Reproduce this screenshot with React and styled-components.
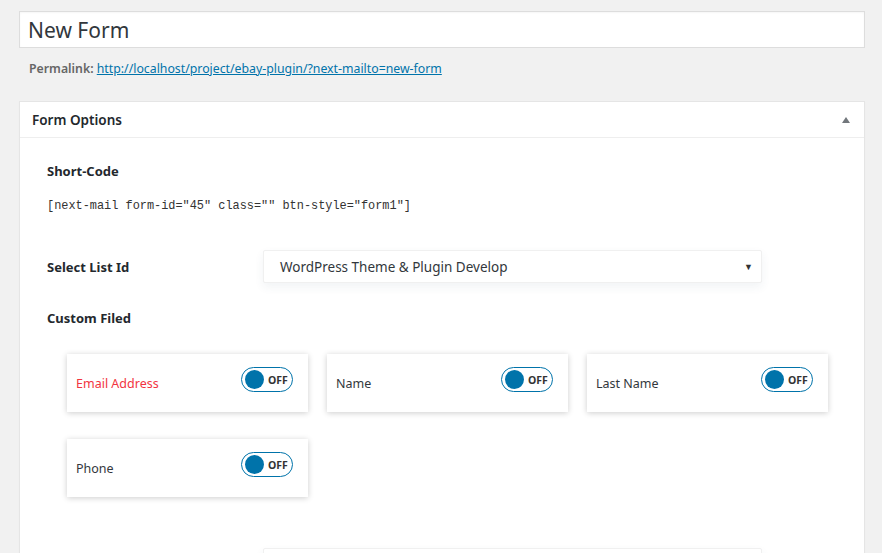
import React from "react";
import styled, { createGlobalStyle } from "styled-components";

const fields = [
  { label: "Email Address", required: true },
  { label: "Name" },
  { label: "Last Name" },
  { label: "Phone" },
];

function Toggle() {
  return (
    <Switch>
      <Knob />
      <SwitchText>OFF</SwitchText>
    </Switch>
  );
}

export default function App() {
  return (
    <>
      <GlobalStyle />
      <Page>
        <TitleInput defaultValue="New Form" />
        <Permalink>
          <strong>Permalink:</strong>{" "}
          <a href="#">http://localhost/project/ebay-plugin/?next-mailto=new-form</a>
        </Permalink>

        <Postbox>
          <PostboxHeader>
            <HeaderTitle>Form Options</HeaderTitle>
            <ToggleArrow />
          </PostboxHeader>
          <Inside>
            <Label>Short-Code</Label>
            <ShortCode>[next-mail form-id="45" class="" btn-style="form1"]</ShortCode>

            <FieldRow>
              <Label>Select List Id</Label>
              <SelectBox>
                <span>WordPress Theme &amp; Plugin Develop</span>
                <Caret>▼</Caret>
              </SelectBox>
            </FieldRow>

            <Label>Custom Filed</Label>
            <CardGrid>
              {fields.map((f) => (
                <Card key={f.label}>
                  <CardLabel $required={f.required}>{f.label}</CardLabel>
                  <Toggle />
                </Card>
              ))}
            </CardGrid>

            <FieldRow $bottom>
              <span />
              <SelectBox />
            </FieldRow>
          </Inside>
        </Postbox>
      </Page>
    </>
  );
}

const GlobalStyle = createGlobalStyle`
  html, body {
    margin: 0;
    background: #f1f1f1;
    overflow: hidden;
  }
  body {
    font-family: "Noto Sans", "Open Sans", sans-serif;
    color: #23282d;
  }
`;

const Page = styled.div`
  padding: 11px 17px 0 19px;
  height: 553px;
  box-sizing: border-box;
  overflow: hidden;
`;

const TitleInput = styled.input`
  display: block;
  width: 100%;
  height: 37px;
  box-sizing: border-box;
  border: 1px solid #ddd;
  background: #fff;
  padding: 0 8px;
  font-family: "Noto Sans", sans-serif;
  font-size: 21px;
  color: #32373c;
  outline: none;
  box-shadow: inset 0 1px 2px rgba(0, 0, 0, 0.04);
`;

const Permalink = styled.div`
  margin: 11px 0 0 10px;
  font-size: 12.3px;
  line-height: 20px;
  color: #666;

  strong {
    font-weight: 600;
  }
  a {
    color: #0073aa;
    text-decoration: underline;
  }
`;

const Postbox = styled.div`
  margin-top: 22px;
  background: #fff;
  border: 1px solid #e5e5e5;
  box-shadow: 0 1px 1px rgba(0, 0, 0, 0.04);
  height: 500px;
`;

const PostboxHeader = styled.div`
  display: flex;
  align-items: center;
  justify-content: space-between;
  height: 35px;
  padding: 0 12px;
  border-bottom: 1px solid #eee;
`;

const HeaderTitle = styled.h2`
  margin: 0;
  font-size: 13.5px;
  font-weight: 600;
  color: #23282d;
`;

const ToggleArrow = styled.span`
  width: 0;
  height: 0;
  border-left: 4px solid transparent;
  border-right: 4px solid transparent;
  border-bottom: 6px solid #72777c;
  margin-right: 2px;
`;

const Inside = styled.div`
  padding: 24px 27px 0 27px;
`;

const Label = styled.div`
  font-size: 13px;
  font-weight: 700;
  color: #23282d;
  line-height: 18px;
`;

const ShortCode = styled.code`
  display: block;
  margin-top: 17px;
  font-family: "Liberation Mono", "DejaVu Sans Mono", monospace;
  font-size: 11.9px;
  color: #333;
  line-height: 18px;
`;

const FieldRow = styled.div`
  display: grid;
  grid-template-columns: 216px 499px;
  align-items: center;
  margin: ${(p) => (p.$bottom ? "51px 0 0" : "35px 0 26px")};
`;

const SelectBox = styled.div`
  display: flex;
  align-items: center;
  justify-content: space-between;
  height: 33px;
  box-sizing: border-box;
  padding: 0 8px 0 16px;
  background: #fff;
  border: 1px solid #f0f0f0;
  border-radius: 2px;
  box-shadow: 0 4px 10px rgba(60, 80, 110, 0.07);
  font-size: 13.5px;
  color: #32373c;
`;

const Caret = styled.span`
  font-size: 9px;
  color: #333;
`;

const CardGrid = styled.div`
  display: grid;
  grid-template-columns: repeat(3, 241px);
  column-gap: 19px;
  row-gap: 27px;
  margin: 27px 0 0 20px;
`;

const Card = styled.div`
  display: flex;
  align-items: flex-start;
  justify-content: space-between;
  height: 58px;
  box-sizing: border-box;
  padding: 13px 15px 0 9px;
  background: #fff;
  box-shadow: 0 1px 6px rgba(0, 0, 0, 0.2);
`;

const CardLabel = styled.span`
  margin-top: 9px;
  font-size: 12.5px;
  line-height: 16px;
  color: ${(p) => (p.$required ? "#f2343f" : "#32373c")};
`;

const Switch = styled.div`
  display: flex;
  align-items: center;
  gap: 4px;
  width: 52px;
  height: 25px;
  box-sizing: border-box;
  padding: 0 0 0 3px;
  border: 1px solid #0073aa;
  border-radius: 13px;
`;

const Knob = styled.span`
  width: 19px;
  height: 19px;
  border-radius: 50%;
  background: #0073aa;
`;

const SwitchText = styled.span`
  font-size: 10.5px;
  font-weight: 700;
  color: #333;
`;
